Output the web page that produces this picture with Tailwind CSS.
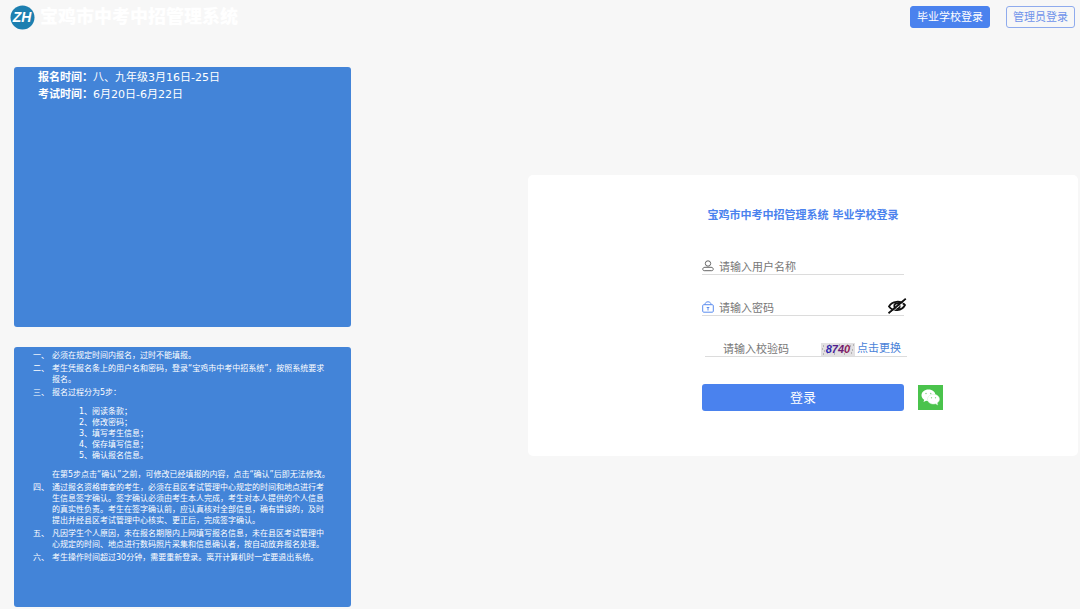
<!DOCTYPE html>
<html lang="zh-CN">
<head>
  <meta charset="UTF-8">
  <meta name="viewport" content="width=device-width, initial-scale=1.0">
  <title>宝鸡市中考中招管理系统</title>
  <script src="https://cdn.jsdelivr.net/npm/@tailwindcss/browser@4"></script>
</head>
<body class="bg-[#f7f7f7] min-h-screen font-['DejaVu_Sans','Noto_Sans_CJK_SC',sans-serif] text-[11px] leading-[17px]">
  <header class="flex items-center h-[34px] pl-[10px] pr-[5px]">
    <svg class="size-[25px] shrink-0" viewBox="0 0 25 25" role="img" aria-label="ZH">
      <circle cx="12.5" cy="12.5" r="12" fill="#1d7fb0"/>
      <text x="12" y="17" text-anchor="middle" font-family="Liberation Sans" font-size="14" font-weight="700" font-style="italic" fill="#fff">ZH</text>
    </svg>
    <h1 class="ml-[5px] text-[18px] leading-[24px] font-black text-white">宝鸡市中考中招管理系统</h1>
    <nav class="ml-auto flex gap-4">
      <button type="button" class="h-[22px] px-[6px] rounded-[3px] border border-[#4a82ee] bg-[#4a82ee] text-white">毕业学校登录</button>
      <button type="button" class="h-[22px] px-[6px] rounded-[3px] border border-[#8fabed] text-[#6f93ea]">管理员登录</button>
    </nav>
  </header>

  <main class="grid grid-cols-[minmax(0,337fr)_minmax(0,550fr)] gap-[177px] items-start pt-[33px] pl-[14px] pr-[2px] pb-[2px]">
    <div class="flex flex-col gap-5 text-white">
      <section class="min-h-[260px] rounded-[3px] bg-[#4384d8] pl-6 pt-[2px]">
        <p><b>报名时间：</b>八、九年级3月16日-25日</p>
        <p><b>考试时间：</b>6月20日-6月22日</p>
      </section>

      <!-- 报名须知 -->
      <section class="min-h-[260px] rounded-[3px] bg-[#4384d8] pl-[19px] pr-[23px] pt-[3px] text-[8px] leading-[11px]">
        <ol class="flex flex-col gap-[2px]">
          <li class="flex"><span class="w-[19px] shrink-0">一、</span><p>必须在规定时间内报名，过时不能填报。</p></li>
          <li class="flex"><span class="w-[19px] shrink-0">二、</span><p>考生凭报名条上的用户名和密码，登录“宝鸡市中考中招系统”，按照系统要求报名。</p></li>
          <li class="flex"><span class="w-[19px] shrink-0">三、</span>
            <div>
              <p>报名过程分为5步：</p>
              <ol class="my-2 pl-[27px]">
                <li>1、阅读条款；</li>
                <li>2、修改密码；</li>
                <li>3、填写考生信息；</li>
                <li>4、保存填写信息；</li>
                <li>5、确认报名信息。</li>
              </ol>
              <p class="whitespace-nowrap">在第5步点击“确认”之前，可修改已经填报的内容，点击“确认”后即无法修改。</p>
            </div>
          </li>
          <li class="flex"><span class="w-[19px] shrink-0">四、</span><p>通过报名资格审查的考生，必须在县区考试管理中心规定的时间和地点进行考生信息签字确认。签字确认必须由考生本人完成，考生对本人提供的个人信息的真实性负责。考生在签字确认前，应认真核对全部信息，确有错误的，及时提出并经县区考试管理中心核实、更正后，完成签字确认。</p></li>
          <li class="flex"><span class="w-[19px] shrink-0">五、</span><p>凡因学生个人原因，未在报名期限内上网填写报名信息，未在县区考试管理中心规定的时间、地点进行数码照片采集和信息确认者，按自动放弃报名处理。</p></li>
          <li class="flex"><span class="w-[19px] shrink-0">六、</span><p>考生操作时间超过30分钟，需要重新登录。离开计算机时一定要退出系统。</p></li>
        </ol>
      </section>
    </div>

    <section class="mt-[108px] rounded-[5px] bg-white pt-[32px] pb-[45px]">
      <h2 class="text-center font-bold text-[#4a82ee]">宝鸡市中考中招管理系统 毕业学校登录</h2>
      <form class="mx-auto mt-[33px] w-[202px]">
        <div class="flex flex-col gap-[23px]">
          <div class="flex items-center h-[18px] border-b border-[#dcdcdc]">
            <label for="username" aria-label="用户名称">
              <svg class="size-[12px]" viewBox="0 0 12 12" fill="none" stroke="#666" stroke-width="1">
                <circle cx="6" cy="3.500" r="2.700"/>
                <path d="M3 7.300h6c1.400 0 2.200.7 2.200 1.900 0 1-.6 1.500-1.400 1.500H2.200c-.8 0-1.400-.5-1.400-1.500C.8 8 1.600 7.300 3 7.300z"/>
              </svg>
            </label>
            <input id="username" type="text" placeholder="请输入用户名称" class="ml-[5px] pt-[3px] w-full h-full outline-none placeholder:text-[#777]">
          </div>
          <div class="relative flex items-center h-[18px] border-b border-[#dcdcdc]">
            <label for="password" aria-label="密码">
              <svg class="size-[12px]" viewBox="0 0 12 12" fill="none" stroke="#5b8def" stroke-width="1">
                <rect x="0.700" y="3.700" width="10.600" height="7.500" rx="1"/>
                <path d="M3 3.700C3 1.800 4.200.8 6 .8s3 1 3 2.900M6 6.500v3M4.700 6.500h2.600"/>
              </svg>
            </label>
            <input id="password" type="password" placeholder="请输入密码" class="ml-[5px] pt-[3px] w-full h-full outline-none placeholder:text-[#777]">
            <button type="button" aria-label="显示密码" class="absolute left-[185px] top-0">
              <svg class="w-[20px] h-[16px]" viewBox="0 0 20 16" fill="none" stroke="#111">
                <path d="M2 8.500C5 3 13.500 2 18 7c-3 6-12 7-16 1.500z" stroke-width="1.800"/>
                <circle cx="10" cy="8" r="2.700" stroke-width="1.800"/>
                <path d="M1.500 15.300L18.800.8" stroke-width="1.800"/>
                <path d="M3 15.800L19.500 2" stroke="#fff" stroke-width=".7"/>
              </svg>
            </button>
          </div>
          <div class="ml-[3px] -mr-[3px] flex items-center h-[18px] border-b border-[#dcdcdc]">
            <input id="captcha" type="text" aria-label="校验码" placeholder="请输入校验码" class="pl-[18px] pt-[3px] w-[116px] h-full outline-none placeholder:text-[#777]">
            <svg class="mt-[3px] w-[34px] h-[13px] shrink-0" viewBox="0 0 34 13">
              <defs>
                <linearGradient id="ink"><stop offset="0" stop-color="#2424b8"/><stop offset="1" stop-color="#9c1648"/></linearGradient>
              </defs>
              <rect width="34" height="13" fill="#e2e0e2"/>
              <path d="M2 3h1M3 8h1M6 10h1M8 2h1M13 11h1M18 2h1M23 11h1M29 3h1M31 7h1M30 10h1M2 11h1M26 2h1M32 2h1M1 6h1" stroke="#888"/>
              <text x="17" y="10" text-anchor="middle" font-family="Liberation Sans" font-size="11" font-weight="700" font-style="italic" fill="url(#ink)">8740</text>
            </svg>
            <a href="#" class="ml-[2px] pt-[2px] whitespace-nowrap text-[#4a82d8]">点击更换</a>
          </div>
        </div>
        <div class="relative mt-[27px]">
          <button type="submit" class="block w-full h-[27px] rounded-[3px] bg-[#4a82ee] text-[13px] text-white">登录</button>
          <button type="button" aria-label="微信登录" class="absolute left-full top-[1px] ml-[14px]">
            <svg class="size-[25px]" viewBox="0 0 25 25">
              <rect width="25" height="25" fill="#4ac34c"/>
              <path fill="#fff" d="M10.500 4.500c-4 0-7 2.600-7 5.800 0 1.900 1 3.500 2.700 4.500l-.7 2.200 2.600-1.300c.8.200 1.600.3 2.400.3 4 0 7-2.600 7-5.700s-3-5.800-7-5.800z"/>
              <path fill="#fff" stroke="#c9efca" stroke-width=".5" d="M15.500 9.300c-3.400 0-6 2.200-6 4.900s2.600 4.900 6 4.900c.7 0 1.400-.1 2-.3l2.300 1.200-.6-2c1.400-.9 2.300-2.300 2.300-3.800 0-2.700-2.700-4.900-6-4.900z"/>
              <g fill="#8ed690"><circle cx="8" cy="8.500" r=".8"/><circle cx="12.700" cy="8.500" r=".8"/><circle cx="13.500" cy="12.800" r=".7"/><circle cx="17.500" cy="12.800" r=".7"/></g>
            </svg>
          </button>
        </div>
      </form>
    </section>
  </main>
</body>
</html>
